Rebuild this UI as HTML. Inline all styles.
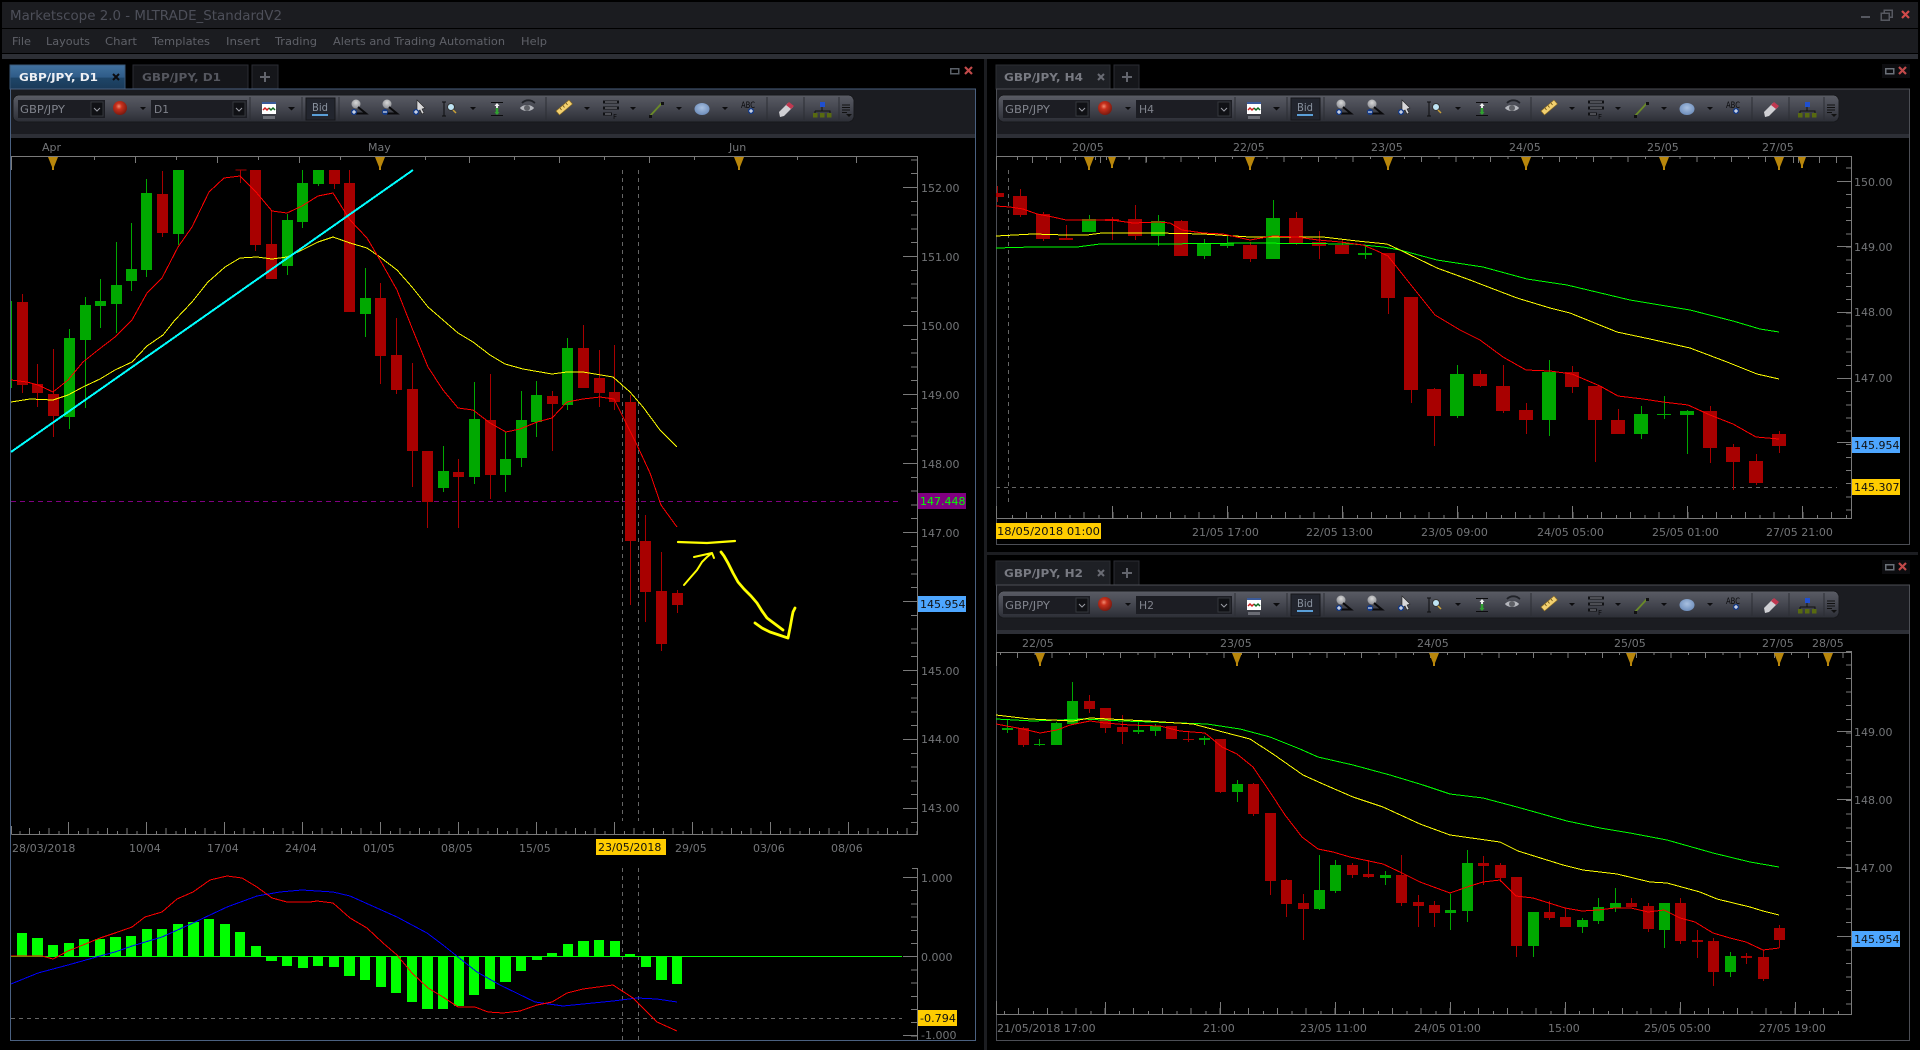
<!DOCTYPE html>
<html><head><meta charset="utf-8"><title>Marketscope 2.0</title>
<style>
html,body{margin:0;padding:0;background:#000;width:1920px;height:1050px;overflow:hidden}
svg{display:block}
text{font-family:"DejaVu Sans","Liberation Sans",sans-serif;font-size:11px;fill:#737578;shape-rendering:auto}
.m{fill:#5f6168;font-size:11px}
.t{font-weight:bold;font-size:11px}
.k{fill:#111}
.c{fill:#80838c;font-size:11px}
.a{font-size:8.5px;fill:#0a0a0c}
</style></head><body>
<svg width="1920" height="1050" viewBox="0 0 1920 1050" xmlns="http://www.w3.org/2000/svg" shape-rendering="crispEdges">
<defs>
<linearGradient id="cap" x1="0" y1="0" x2="0" y2="1"><stop offset="0" stop-color="#5a5c65"/><stop offset=".45" stop-color="#474952"/><stop offset="1" stop-color="#2c2e35"/></linearGradient>
<linearGradient id="act" x1="0" y1="0" x2="0" y2="1"><stop offset="0" stop-color="#41719f"/><stop offset=".5" stop-color="#2f5c88"/><stop offset=".55" stop-color="#1e4568"/><stop offset="1" stop-color="#1a3a58"/></linearGradient>
<radialGradient id="sph" cx=".42" cy=".38" r=".62"><stop offset="0" stop-color="#f08a70"/><stop offset=".35" stop-color="#c8301c"/><stop offset="1" stop-color="#7a1a10"/></radialGradient>
<radialGradient id="ell" cx=".5" cy=".4" r=".7"><stop offset="0" stop-color="#a8c0e0"/><stop offset="1" stop-color="#6485b5"/></radialGradient>
<radialGradient id="mag" cx=".5" cy=".35" r=".7"><stop offset="0" stop-color="#d8d8d8"/><stop offset="1" stop-color="#85878d"/></radialGradient>
<g id="tb">
<rect x="13" y="95" width="841" height="27" rx="6" fill="url(#cap)" stroke="#17181c"/>
<rect x="18" y="100" width="87" height="18" fill="#1c1d23"/><rect x="91" y="102" width="12" height="14" fill="#101115" stroke="#34363c"/>
<rect x="151" y="100" width="96" height="18" fill="#1c1d23"/><rect x="233" y="102" width="12" height="14" fill="#101115" stroke="#34363c"/>
<path d="M94 108l3 3 3-3M236 108l3 3 3-3" fill="none" stroke="#9a9ca4" shape-rendering="auto"/>
<circle cx="120" cy="108" r="7" fill="url(#sph)" shape-rendering="auto"/>
<path d="M140 107h6l-3 3zM288 107h7l-3.500 3.500zM470 107h6l-3 3zM584 107h6l-3 3zM630 107h6l-3 3zM676 107h6l-3 3zM722 107h6l-3 3z" fill="#0c0c0e" shape-rendering="auto"/>
<rect x="262" y="102" width="14" height="12" fill="#fff"/><rect x="262" y="102" width="14" height="2" fill="#3a5a9a"/><path d="M263 110l2-2 2 2 2-2" fill="none" stroke="#d02020" stroke-width="1.500" shape-rendering="auto"/><path d="M269 108l2 2 2-2 2 2" fill="none" stroke="#106a20" stroke-width="1.500" shape-rendering="auto"/><rect x="263" y="116" width="12" height="3" fill="#6a6c74"/>
<path d="M250 97V120M302 97V120M339 97V120M546 97V120M767 97V120M804 97V120M839 97V120" stroke="#2c2e34"/>
<rect x="306" y="98" width="29" height="22" fill="#22252e" stroke="#15161a"/><rect x="312" y="114" width="16" height="2" fill="#5a9fd8"/>
<g shape-rendering="auto">
<circle cx="356" cy="104" r="4.500" fill="url(#mag)"/><path d="M358 107l8 6.500h-11" fill="none" stroke="#0a0a0c" stroke-width="2"/><circle cx="354" cy="112" r="3" fill="#123a8a"/><path d="M352 112h4M354 110v4" stroke="#fff"/>
<circle cx="387" cy="104" r="4.500" fill="url(#mag)"/><path d="M389 107l8 6.500h-11" fill="none" stroke="#0a0a0c" stroke-width="2"/><circle cx="385" cy="112" r="3" fill="#123a8a"/><path d="M383 112h4" stroke="#fff"/>
<path d="M417 100v12l3-2 2 4 2-1-2-4 3-1z" fill="#d8d8da" stroke="#222" stroke-width=".6"/><circle cx="416" cy="112" r="3" fill="#123a8a"/><path d="M414 112h4M416 110v4" stroke="#fff"/>
<path d="M444 102v14M442 102h4M442 116h4" stroke="#0c0c0e" fill="none"/><circle cx="451" cy="107" r="3.500" fill="#bfe4f4" stroke="#333"/><path d="M453 110l3 3" stroke="#c9a038" stroke-width="1.500"/>
<path d="M491 102.500h12M491 115.500h12" stroke="#0c0c0e"/><path d="M497 108v6" stroke="#30a030" stroke-width="2.500"/><path d="M497 104v4" stroke="#e8e8e8" stroke-width="2"/><path d="M494.500 106l2.500-3 2.500 3z" fill="#f0f0f0"/><path d="M494.500 112l2.500 3 2.500-3z" fill="#30a030"/>
<path d="M520 108c3-4 11-4 14 0-3 4-11 4-14 0z" fill="#b4b6bc"/><circle cx="527" cy="108" r="3" fill="#5e6066"/><path d="M522 103c3-3 7-3 10-2l3 2" stroke="#202228" fill="none" stroke-width="1.800"/>
<path d="M556 111l13-11 3.500 4-13 11z" fill="#f2d070" stroke="#8a6a20" stroke-width=".6"/><path d="M560 108l1.500 2M563 105.500l1.500 2M566 103l1.500 2" stroke="#6a5010" stroke-width=".8"/>
<path d="M603 102h16M603 108h16M603 114h9" stroke="#101114" stroke-width="3"/><path d="M605 102h12M605 108h12M605 114h6" stroke="#8a8c94"/><text x="613" y="119" style="font-size:7px;fill:#0a0a0c">F</text>
<path d="M650 116l12-13" stroke="#6a8a28" stroke-width="1.800"/><path d="M649 115h3v3h-3zM661 102h3v3h-3z" fill="#111"/>
<ellipse cx="702" cy="109" rx="7.500" ry="6" fill="url(#ell)"/>
<circle cx="751" cy="111" r="3" fill="#123a8a"/><path d="M749 111h4M751 109v4" stroke="#fff"/>
<path d="M779 112l9-9 5 4-9 9-4 1z" fill="#d0d0d4"/><path d="M786 105l3-3 5 4-3 3z" fill="#c03850"/>
<rect x="820" y="102" width="5" height="5" fill="#2050d0"/><path d="M822 107v4M815 111h15v2M815 111v2" fill="none" stroke="#111"/><rect x="813" y="113" width="4.500" height="4.500" fill="#586a10"/><rect x="820" y="113" width="4.500" height="4.500" fill="#586a10"/><rect x="827" y="113" width="4.500" height="4.500" fill="#586a10"/>
<path d="M842 105h8M842 107.500h8M842 110h8M842 112.500h5" stroke="#111"/><path d="M846 114h6l-3 3z" fill="#111"/>
</g>
</g>
</defs>
<rect width="1920" height="1050" fill="#000"/>
<rect x="2" y="2" width="1916" height="26" fill="#1b1c20"/>
<rect x="2" y="29" width="1916" height="24" fill="#1b1c20"/>
<rect x="2" y="54" width="1916" height="5" fill="#2d2f35"/>
<text x="10" y="20" style="font-size:13px;fill:#4d4f59" textLength="272" lengthAdjust="spacingAndGlyphs">Marketscope 2.0 - MLTRADE_StandardV2</text>
<text class="m" x="12" y="45" textLength="19" lengthAdjust="spacingAndGlyphs">File</text>
<text class="m" x="46" y="45" textLength="44" lengthAdjust="spacingAndGlyphs">Layouts</text>
<text class="m" x="105" y="45" textLength="32" lengthAdjust="spacingAndGlyphs">Chart</text>
<text class="m" x="152" y="45" textLength="58" lengthAdjust="spacingAndGlyphs">Templates</text>
<text class="m" x="226" y="45" textLength="34" lengthAdjust="spacingAndGlyphs">Insert</text>
<text class="m" x="275" y="45" textLength="42" lengthAdjust="spacingAndGlyphs">Trading</text>
<text class="m" x="333" y="45" textLength="172" lengthAdjust="spacingAndGlyphs">Alerts and Trading Automation</text>
<text class="m" x="521" y="45" textLength="26" lengthAdjust="spacingAndGlyphs">Help</text>
<path d="M1861 17h9" stroke="#565860" stroke-width="2"/>
<path d="M1881 13h8v7h-8zM1884 13v-3h8v7h-3" fill="none" stroke="#565860" stroke-width="1.500"/>
<path d="M1902 11l7 7M1909 11l-7 7" stroke="#d24a4a" stroke-width="2.200" shape-rendering="auto"/>
<rect x="984" y="59" width="3" height="991" fill="#1c1d21"/>
<rect x="987" y="552" width="931" height="3" fill="#1c1d21"/>

<!-- LEFT PANEL -->
<rect x="10" y="65" width="115" height="24" fill="url(#act)" stroke="#3a5878"/>
<text class="t" x="19" y="81" style="fill:#eef0f4" textLength="79" lengthAdjust="spacingAndGlyphs">GBP/JPY, D1</text>
<path d="M113 74l6 6M119 74l-6 6" stroke="#0b0c10" stroke-width="2" shape-rendering="auto"/>
<rect x="133" y="65" width="115" height="24" fill="#15161a" stroke="#2a2c33"/>
<text class="t" x="142" y="81" style="fill:#55575f" textLength="79" lengthAdjust="spacingAndGlyphs">GBP/JPY, D1</text>
<rect x="252" y="65" width="26" height="24" fill="#15161a" stroke="#2a2c33"/>
<path d="M260 77h10M265 72v10" stroke="#62646c" stroke-width="2"/>
<rect x="950.500" y="68.500" width="8" height="5" fill="none" stroke="#5a6068" stroke-width="1.500"/>
<path d="M965 67l7 7M972 67l-7 7" stroke="#c24a4a" stroke-width="2.200" shape-rendering="auto"/>
<rect x="10" y="89" width="966" height="49" fill="#1b1c21"/>
<rect x="11" y="134" width="964" height="4" fill="#2d2f36"/>
<use href="#tb"/>
<text class="c" x="20" y="113" textLength="45" lengthAdjust="spacingAndGlyphs">GBP/JPY</text>
<text class="c" x="154" y="113" textLength="15" lengthAdjust="spacingAndGlyphs">D1</text>
<text x="312" y="111" style="font-size:11px;fill:#8a93a0" textLength="16" lengthAdjust="spacingAndGlyphs">Bid</text>
<text class="a" x="741" y="108" textLength="14" lengthAdjust="spacingAndGlyphs">ABC</text>
<path d="M10.500 89H975.500V1040.500H10.500Z" fill="none" stroke="#4a6080"/>
<text x="42" y="151">Apr</text><text x="368" y="151">May</text><text x="729" y="151">Jun</text>
<path d="M11.500 170V156.500H917.500V834.500H11.500M11.500 826V834.500" fill="none" stroke="#7a7a7a"/>
<path d="M94.500 157v3M176.500 157v3M258.500 157v3M340.500 157v3M425.500 157v3M514.500 157v3M604.500 157v3M694.500 157v3M135.500 157v6M217.500 157v6M299.500 157v6M469.500 157v6M559.500 157v6M649.500 157v6M797.500 157v3M856.500 157v6" stroke="#7a7a7a" fill="none"/>
<path d="M48 157h10l-4 10v3h-2v-3zM375 157h10l-4 10v3h-2v-3zM734 157h10l-4 10v3h-2v-3z" fill="#b8860b" shape-rendering="auto"/>
<path d="M914 159.400V834" stroke="#7a7a7a" stroke-width="6" stroke-dasharray="1 12.800" fill="none"/>
<path d="M903 187.500h14M903 256.500h14M903 325.500h14M903 394.500h14M903 463.500h14M903 532.500h14M903 601.500h14M903 670.500h14M903 739.500h14M903 808.500h14" stroke="#7a7a7a"/>
<text x="921" y="192">152.00</text><text x="921" y="261">151.00</text><text x="921" y="330">150.00</text><text x="921" y="399">149.00</text><text x="921" y="468">148.00</text><text x="921" y="537">147.00</text><text x="921" y="675">145.00</text><text x="921" y="743">144.00</text><text x="921" y="812">143.00</text>
<path d="M68.500 822v12M146.500 822v12M224.500 822v12M302.500 822v12M380.500 822v12M458.500 822v12M536.500 822v12M614.500 822v12M692.500 822v12M770.500 822v12M848.500 822v12" stroke="#7a7a7a"/>
<path d="M29 831H917" stroke="#7a7a7a" stroke-width="6" stroke-dasharray="1 18.500"/>
<path d="M19.500 832.500H917" stroke="#7a7a7a" stroke-width="3" stroke-dasharray="1 18.500"/>
<text x="12" y="852">28/03/2018</text><text x="129" y="852">10/04</text><text x="207" y="852">17/04</text><text x="285" y="852">24/04</text><text x="363" y="852">01/05</text><text x="441" y="852">08/05</text><text x="519" y="852">15/05</text><text x="675" y="852">29/05</text><text x="753" y="852">03/06</text><text x="831" y="852">08/06</text>
<rect x="596" y="839" width="70" height="16" fill="#ffcc00"/><text class="k" x="598" y="851">23/05/2018</text>
<path d="M622.500 170V821M638.500 170V821M622.500 868V1040M638.500 868V1040" stroke="#666" stroke-dasharray="4 4"/>
<path d="M11 501.500H902" stroke="#800080" stroke-dasharray="5 4"/>
<g transform="translate(.5 0)">
<path d="M22 294V393M37 364V407M53 349V437M162 171V237M240 170V183M235 170H246M255 245V251M271 210V279M334 184V189M349 170V312M380 283V384M396 318V394M412 363V487M427 451V528M458 459V528M490 374V499M552 391V451M583 325V388M599 350V407M614 345V410M630 395V605M645 515V622M661 552V651M677 590V613" stroke="#a80000"/>
<path d="M11 301V388M69 329V429M85 297V408M100 279V328M116 242V333M131 223V291M146 179V277M178 234V245M287 214V275M302 170V228M318 184V186M365 268V337M443 446V492M474 382V484M505 432V492M521 391V467M536 381V437M567 338V410" stroke="#00a800"/>
<path d="M22 302V385M37 384V393M53 394V416M162 194V233M255 170V245M271 244V279M334 170V184M349 183V312M380 298V356M396 355V390M412 389V451M427 451V502M458 472V477M490 420V475M552 396V404M583 348V388M599 378V393M614 392V402M630 402V541M645 541V592M661 591V644M677 593V605" stroke="#a80000" stroke-width="11"/>
<path d="M69 338V417M85 305V340M100 301V306M116 285V304M131 269V281M146 193V270M178 170V234M287 220V266M302 183V222M318 170V184M365 298V314M443 471V488M474 419V477M505 459V475M521 420V458M536 395V422M567 348V405" stroke="#00a800" stroke-width="11"/>
</g>
<path fill="none" stroke="#ff0" d="M11 402L30 399 53 400 68 395 83 387 100 379 115 370 132 362 147 346 163 335 175 320 192 302 208 282 225 267 240 258 257 257 272 259 287 257 302 250 318 242 333 237 350 243 367 248 380 257 397 270 412 287 428 307 443 320 458 333 473 342 490 355 505 364 523 369 552 374 567 372 583 372 613 377 630 392 643 407 660 430 677 447"/>
<path fill="none" stroke="#f00" d="M11 380L27 382 38 385 53 392 68 380 83 362 98 350 115 337 132 320 147 293 162 278 178 247 192 227 209 192 224 178 240 176 256 192 272 211 287 213 302 206 318 196 333 193 350 220 367 238 380 260 397 290 412 328 428 367 443 390 458 408 473 410 490 423 506 432 520 429 537 422 552 418 567 402 583 399 600 397 614 399 623 417 637 445 650 473 661 505 677 527"/>
<path fill="none" stroke="#0ff" stroke-width="2" d="M11 452L413 170"/>
<g fill="none" stroke="#ff0" stroke-width="2.800" stroke-linecap="round" stroke-linejoin="round" shape-rendering="auto">
<path d="M678 542L692 542.500 707 543 721 542 735 541" stroke-width="2.200"/>
<path d="M684 585L690 578 697 570 702 562 707 557 712 553M694 557L703 555 712 553 714 558" stroke-width="2"/>
<path d="M721 552L724 556 728 563 733 573 738 582 744 589 751 596 757 603 762 611 767 618 775 624 783 630"/>
<path d="M755 623L762 628 770 632 779 635 788 638 790 628 792 617 793 612 795 608"/>
</g>
<rect x="918" y="493" width="48" height="16" fill="#800080"/><text x="920" y="505" style="fill:#0f0">147.448</text>
<rect x="918" y="596" width="48" height="16" fill="#4da6ff"/><text class="k" x="920" y="608">145.954</text>
<!-- MACD -->
<path d="M917.500 868V1040" stroke="#7a7a7a"/>
<path d="M914 877V1040" stroke="#7a7a7a" stroke-width="6" stroke-dasharray="1 12.200"/>
<path d="M912 868.500h5M903 877.500h14M903 956.500h14M903 1035.500h14" stroke="#7a7a7a"/>
<text x="921" y="882">1.000</text><text x="921" y="961">0.000</text><text x="921" y="1039">-1.000</text>
<path d="M11 1018.500H902" stroke="#666" stroke-dasharray="4 4"/>
<path fill="#0f0" d="M17 933h10v23H17zM32 938h11v18H32zM48 945h10v11H48zM64 943h10v13H64zM79 939h10v17H79zM95 939h10v17H95zM110 937h11v19h-11zM126 936h10v20h-10zM142 929h10v27h-10zM157 929h10v27h-10zM173 924h10v32h-10zM188 922h11v34h-11zM204 919h10v37h-10zM220 924h10v32h-10zM235 932h10v24h-10zM251 946h10v10h-10zM266 956h11v5h-11zM282 956h10v10h-10zM298 956h10v12h-10zM313 956h10v10h-10zM329 956h10v11h-10zM344 956h11v20h-11zM360 956h10v24h-10zM376 956h10v31h-10zM391 956h10v37h-10zM407 956h10v46h-10zM422 956h11v53h-11zM438 956h10v53h-10zM454 956h10v50h-10zM469 956h10v39h-10zM485 956h10v33h-10zM500 956h11v26h-11zM516 956h10v15h-10zM532 956h10v4h-10zM547 953h10v3h-10zM563 944h10v12h-10zM578 941h11v15h-11zM594 940h10v16h-10zM610 941h10v15h-10zM625 954h10v2h-10zM641 956h10v11h-10zM656 956h11v24h-11zM672 956h10v28h-10z"/>
<path d="M11 956.500H902" stroke="#0f0"/>
<path fill="none" stroke="#00f" d="M11 984L38 973 68 965 100 956 115 952 132 946 162 937 193 923 227 907 257 896 280 892 302 890 333 892 350 896 397 917 427 933 443 945 458 957 477 972 500 985 535 1002 563 1006 583 1004 613 1001 637 998 657 999 677 1002"/>
<path fill="none" stroke="#f00" d="M11 956L42 956 53 959 68 951 83 945 100 938 115 933 132 927 145 917 162 912 177 899 193 892 210 880 227 876 242 878 257 887 272 898 287 902 310 902 317 901 333 903 350 918 367 928 383 943 397 955 412 973 428 988 443 997 458 1007 475 1007 488 1012 503 1013 520 1011 537 1005 552 1002 567 993 583 989 613 985 633 998 657 1022 677 1031"/>
<rect x="918" y="1010" width="39" height="16" fill="#ffcc00"/><text class="k" x="920" y="1022" textLength="36" lengthAdjust="spacingAndGlyphs">-0.794</text>

<!-- TOP RIGHT -->
<rect x="996" y="65" width="114" height="24" fill="#1e2025" stroke="#2c2e34"/>
<text class="t" x="1004" y="81" style="fill:#787a82" textLength="79" lengthAdjust="spacingAndGlyphs">GBP/JPY, H4</text>
<path d="M1098 74l6 6M1104 74l-6 6" stroke="#6a6c74" stroke-width="2" shape-rendering="auto"/>
<rect x="1114" y="65" width="25" height="24" fill="#15161a" stroke="#2a2c33"/>
<path d="M1122 77h10M1127 72v10" stroke="#62646c" stroke-width="2"/>
<rect x="1882" y="64" width="28" height="14" fill="#0d0d10"/>
<rect x="1885.500" y="68.500" width="8" height="5" fill="none" stroke="#6a7078" stroke-width="1.500"/>
<path d="M1899 67l7 7M1906 67l-7 7" stroke="#c24a4a" stroke-width="2.200" shape-rendering="auto"/>
<rect x="996" y="89" width="914" height="49" fill="#1b1c21"/>
<rect x="997" y="134" width="913" height="4" fill="#2d2f36"/>
<use href="#tb" transform="translate(985 0)"/>
<text class="c" x="1005" y="113" textLength="45" lengthAdjust="spacingAndGlyphs">GBP/JPY</text>
<text class="c" x="1139" y="113" textLength="15" lengthAdjust="spacingAndGlyphs">H4</text>
<text x="1297" y="111" style="fill:#8a93a0" textLength="16" lengthAdjust="spacingAndGlyphs">Bid</text>
<text class="a" x="1726" y="108" textLength="14" lengthAdjust="spacingAndGlyphs">ABC</text>
<path d="M996.500 89H1909.500V544.500H996.500Z" fill="none" stroke="#4c4e55"/>
<text x="1072" y="151">20/05</text><text x="1233" y="151">22/05</text><text x="1371" y="151">23/05</text><text x="1509" y="151">24/05</text><text x="1647" y="151">25/05</text><text x="1762" y="151">27/05</text>
<path d="M996.500 170V156.500H1851.500V518.500H996.500M996.500 506V518.500" fill="none" stroke="#7a7a7a"/>
<path d="M1017.500 157v3M1032.500 157v6M1046.500 157v3M1060.500 157v6M1075.500 157v3M1095.500 157v3M1100.500 157v6M1106.500 157v3M1129 157v3M1146 157v6" stroke="#7a7a7a"/>
<path d="M1129 157.500H1770" stroke="#7a7a7a" stroke-width="3" stroke-dasharray="1 33.400" stroke-dashoffset="0"/>
<path d="M1146 159H1790" stroke="#7a7a7a" stroke-width="6" stroke-dasharray="1 33.400"/>
<path d="M1793.500 157v6M1798.500 157v6M1819.500 157v6M1836.500 157v6" stroke="#7a7a7a"/>
<path d="M1084 157h10l-4 10v3h-2v-3zM1108 157h8l-3 8v3h-2v-3zM1245 157h10l-4 10v3h-2v-3zM1383 157h10l-4 10v3h-2v-3zM1521 157h10l-4 10v3h-2v-3zM1659 157h10l-4 10v3h-2v-3zM1774 157h10l-4 10v3h-2v-3zM1798 157h8l-3 8v3h-2v-3z" fill="#b8860b" shape-rendering="auto"/>
<path d="M1849 167.600V518" stroke="#7a7a7a" stroke-width="6" stroke-dasharray="1 12.150"/>
<path d="M1837 181.500h15M1837 246.500h15M1837 312.500h15M1837 378.500h15M1837 442.500h15" stroke="#7a7a7a"/>
<text x="1854" y="186">150.00</text><text x="1854" y="251">149.00</text><text x="1854" y="316">148.00</text><text x="1854" y="382">147.00</text>
<path d="M1112.500 506v12M1227.500 506v12M1342.500 506v12M1457.500 506v12M1572.500 506v12M1687.500 506v12M1802.500 506v12" stroke="#7a7a7a"/>
<path d="M1026 515H1851" stroke="#7a7a7a" stroke-width="6" stroke-dasharray="1 27.750"/>
<path d="M1012 516.500H1851" stroke="#7a7a7a" stroke-width="3" stroke-dasharray="1 27.750"/>
<rect x="996" y="523" width="105" height="16" fill="#ffcc00"/><text class="k" x="997" y="535" textLength="103" lengthAdjust="spacingAndGlyphs">18/05/2018 01:00</text>
<text x="1192" y="536">21/05 17:00</text><text x="1306" y="536">22/05 13:00</text><text x="1421" y="536">23/05 09:00</text><text x="1537" y="536">24/05 05:00</text><text x="1652" y="536">25/05 01:00</text><text x="1766" y="536">27/05 21:00</text>
<path d="M1008.500 170V503" stroke="#666" stroke-dasharray="4 4"/>
<path d="M996 487.500H1837" stroke="#666" stroke-dasharray="4 4"/>
<g transform="translate(.5 0)">
<path d="M997 186V202M1020 189V217M1043 212V241M1066 225V240M1112 217V240M1135 205V240M1181 220V256M1250 242V262M1296 212V245M1319 231V259M1342 239V254M1388 253V314M1411 297V403M1434 388V446M1480 370V387M1503 365V413M1526 403V434M1572 366V393M1595 386V462M1618 409V434M1710 406V463M1733 444V490M1756 454V485M1779 431V453" stroke="#a80000"/>
<path d="M1089 215V232M1158 215V246M1204 239V259M1227 235V248M1273 200V259M1365 246V259M1457 365V418M1549 360V436M1641 406V439M1664 396V419M1687 410V454" stroke="#00a800"/>
</g>
<path d="M1000 193V197" stroke="#a80000" stroke-width="8"/>
<path d="M1020 196V215M1043 214V239M1066 238V240M1112 219V221M1135 219V236M1181 221V256M1250 245V259M1296 218V243M1319 242V246M1342 245V254M1388 253V298M1411 297V390M1434 389V416M1480 374V386M1503 386V411M1526 410V420M1572 372V387M1595 386V420M1618 420V434M1710 411V448M1733 447V462M1756 461V483M1779 434V446" stroke="#a80000" stroke-width="14"/>
<path d="M1089 219V232M1158 221V236M1204 243V256M1227 243V246M1273 218V259M1365 253V255M1457 374V416M1549 372V420M1641 414V434M1664 414V415M1687 411V415" stroke="#00a800" stroke-width="14"/>
<path fill="none" stroke="#0f0" d="M996 248L1033 247 1077 247 1100 244 1160 244 1250 243 1353 244 1383 247 1400 250 1437 260 1450 262 1483 267 1527 279 1567 285 1630 300 1690 310 1733 321 1760 329 1779 332"/>
<path fill="none" stroke="#ff0" d="M996 236L1033 234 1066 235 1087 235 1102 233 1157 233 1203 234 1250 237 1323 237 1357 241 1387 244 1400 250 1437 268 1470 280 1483 285 1517 298 1550 308 1570 313 1617 332 1650 339 1690 348 1727 362 1757 374 1779 379"/>
<path fill="none" stroke="#f00" d="M996 206L1010 207 1023 209 1037 214 1053 217 1066 220 1112 220 1133 223 1158 222 1170 223 1182 230 1203 233 1223 234 1250 240 1273 236 1297 237 1318 240 1340 242 1363 245 1375 250 1388 256 1407 280 1423 300 1435 315 1460 330 1470 335 1480 340 1503 357 1526 370 1550 371 1572 374 1600 386 1618 396 1643 399 1663 402 1688 405 1710 415 1733 424 1756 437 1779 439"/>
<rect x="1852" y="437" width="48" height="16" fill="#4da6ff"/><text class="k" x="1854" y="449">145.954</text>
<rect x="1852" y="479" width="48" height="16" fill="#ffcc00"/><text class="k" x="1854" y="491">145.307</text>

<!-- BOTTOM RIGHT -->
<rect x="996" y="561" width="114" height="24" fill="#1e2025" stroke="#2c2e34"/>
<text class="t" x="1004" y="577" style="fill:#787a82" textLength="79" lengthAdjust="spacingAndGlyphs">GBP/JPY, H2</text>
<path d="M1098 570l6 6M1104 570l-6 6" stroke="#6a6c74" stroke-width="2" shape-rendering="auto"/>
<rect x="1114" y="561" width="25" height="24" fill="#15161a" stroke="#2a2c33"/>
<path d="M1122 573h10M1127 568v10" stroke="#62646c" stroke-width="2"/>
<rect x="1882" y="560" width="28" height="14" fill="#0d0d10"/>
<rect x="1885.500" y="564.500" width="8" height="5" fill="none" stroke="#6a7078" stroke-width="1.500"/>
<path d="M1899 563l7 7M1906 563l-7 7" stroke="#c24a4a" stroke-width="2.200" shape-rendering="auto"/>
<rect x="996" y="585" width="914" height="49" fill="#1b1c21"/>
<rect x="997" y="630" width="913" height="4" fill="#2d2f36"/>
<use href="#tb" transform="translate(985 496)"/>
<text class="c" x="1005" y="609" textLength="45" lengthAdjust="spacingAndGlyphs">GBP/JPY</text>
<text class="c" x="1139" y="609" textLength="15" lengthAdjust="spacingAndGlyphs">H2</text>
<text x="1297" y="607" style="fill:#8a93a0" textLength="16" lengthAdjust="spacingAndGlyphs">Bid</text>
<text class="a" x="1726" y="604" textLength="14" lengthAdjust="spacingAndGlyphs">ABC</text>
<path d="M996.500 585H1909.500V1040.500H996.500Z" fill="none" stroke="#4c4e55"/>
<text x="1022" y="647">22/05</text><text x="1220" y="647">23/05</text><text x="1417" y="647">24/05</text><text x="1614" y="647">25/05</text><text x="1762" y="647">27/05</text><text x="1812" y="647">28/05</text>
<path d="M996.500 666V652.500H1851.500V1014.500H996.500M996.500 1001V1014.500" fill="none" stroke="#7a7a7a"/>
<path d="M1000 653.500H1850" stroke="#7a7a7a" stroke-width="3" stroke-dasharray="1 33.400"/>
<path d="M1017 655H1850" stroke="#7a7a7a" stroke-width="6" stroke-dasharray="1 33.400"/>
<path d="M1035 653h10l-4 10v3h-2v-3zM1232 653h10l-4 10v3h-2v-3zM1429 653h10l-4 10v3h-2v-3zM1626 653h10l-4 10v3h-2v-3zM1774 653h10l-4 10v3h-2v-3zM1823 653h10l-4 10v3h-2v-3z" fill="#b8860b" shape-rendering="auto"/>
<path d="M1849 651V1014" stroke="#7a7a7a" stroke-width="6" stroke-dasharray="1 12.560"/>
<path d="M1837 731.500h15M1837 799.500h15M1837 867.500h15M1837 936.500h15" stroke="#7a7a7a"/>
<text x="1854" y="736">149.00</text><text x="1854" y="804">148.00</text><text x="1854" y="872">147.00</text>
<path d="M1105.500 1002v12M1220.500 1002v12M1335.500 1002v12M1450.500 1002v12M1565.500 1002v12M1680.500 1002v12M1795.500 1002v12" stroke="#7a7a7a"/>
<path d="M1018 1011H1851" stroke="#7a7a7a" stroke-width="6" stroke-dasharray="1 27.750"/>
<path d="M1004 1012.500H1851" stroke="#7a7a7a" stroke-width="3" stroke-dasharray="1 27.750"/>
<text x="997" y="1032">21/05/2018 17:00</text><text x="1203" y="1032">21:00</text><text x="1300" y="1032">23/05 11:00</text><text x="1414" y="1032">24/05 01:00</text><text x="1548" y="1032">15:00</text><text x="1644" y="1032">25/05 05:00</text><text x="1759" y="1032">27/05 19:00</text>
<g transform="translate(.5 0)">
<path d="M1023 727V747M1089 695V713M1105 708V733M1122 715V744M1171 726V739M1188 732V742M1220 739V793M1253 783V816M1270 813V895M1286 879V917M1303 894V940M1352 863V878M1368 860V878M1401 855V906M1418 895V927M1434 901V927M1483 856V885M1500 863V882M1516 877V957M1549 901V920M1565 908V927M1631 898V907M1648 903V932M1680 898V944M1697 930V958M1713 938V986M1746 953V964M1763 950V981M1779 925V948" stroke="#a80000"/>
<path d="M1007 720V733M1039 739V746M1056 722V745M1072 682V724M1138 722V734M1155 724V736M1204 736V745M1237 780V802M1319 855V910M1335 860V893M1385 871V885M1450 894V930M1467 850V922M1533 912V957M1582 918V933M1598 898V924M1615 888V912M1664 903V948M1730 952V977" stroke="#00a800"/>
<path d="M1023 728V745M1089 701V709M1105 708V728M1122 727V732M1171 726V739M1188 739V740M1220 739V792M1253 784V814M1270 813V881M1286 880V904M1303 903V909M1352 865V875M1368 874V877M1401 875V903M1418 902V906M1434 905V913M1483 863V866M1500 865V878M1516 877V946M1549 912V918M1565 917V927M1631 903V907M1648 906V929M1680 903V941M1697 940V942M1713 941V972M1746 956V958M1763 957V979M1779 928V940" stroke="#a80000" stroke-width="11"/>
<path d="M1007 728V730M1039 744V745M1056 723V745M1072 701V724M1138 730V732M1155 726V731M1204 738V740M1237 784V792M1319 890V909M1335 865V891M1385 875V878M1450 910V913M1467 863V911M1533 912V946M1582 920V927M1598 907V921M1615 903V908M1664 903V930M1730 956V972" stroke="#00a800" stroke-width="11"/>
</g>
<path fill="none" stroke="#0f0" d="M996 719L1033 721 1083 719 1123 721 1180 723 1207 724 1240 729 1270 737 1300 749 1318 757 1353 765 1390 775 1423 785 1450 794 1483 798 1517 807 1567 821 1600 828 1630 833 1667 840 1713 853 1750 862 1779 867"/>
<path fill="none" stroke="#ff0" d="M996 715L1030 719 1073 721 1090 718 1147 721 1193 724 1223 732 1250 739 1273 754 1303 775 1323 784 1353 797 1383 807 1420 824 1450 835 1500 842 1518 851 1563 865 1583 870 1617 874 1650 882 1667 883 1700 892 1717 899 1750 907 1763 911 1779 915"/>
<path fill="none" stroke="#f00" d="M996 724L1023 729 1040 733 1057 730 1070 725 1090 721 1105 723 1130 725 1160 726 1180 731 1205 733 1222 747 1237 754 1253 767 1270 792 1285 815 1302 837 1318 849 1333 852 1350 857 1383 864 1402 873 1420 882 1450 893 1470 886 1483 882 1500 880 1516 896 1533 898 1565 908 1582 911 1598 910 1615 908 1631 908 1648 912 1664 910 1680 918 1695 922 1713 933 1730 938 1746 942 1763 950 1779 948"/>
<rect x="1852" y="931" width="48" height="16" fill="#4da6ff"/><text class="k" x="1854" y="943">145.954</text>
</svg>
</body></html>
